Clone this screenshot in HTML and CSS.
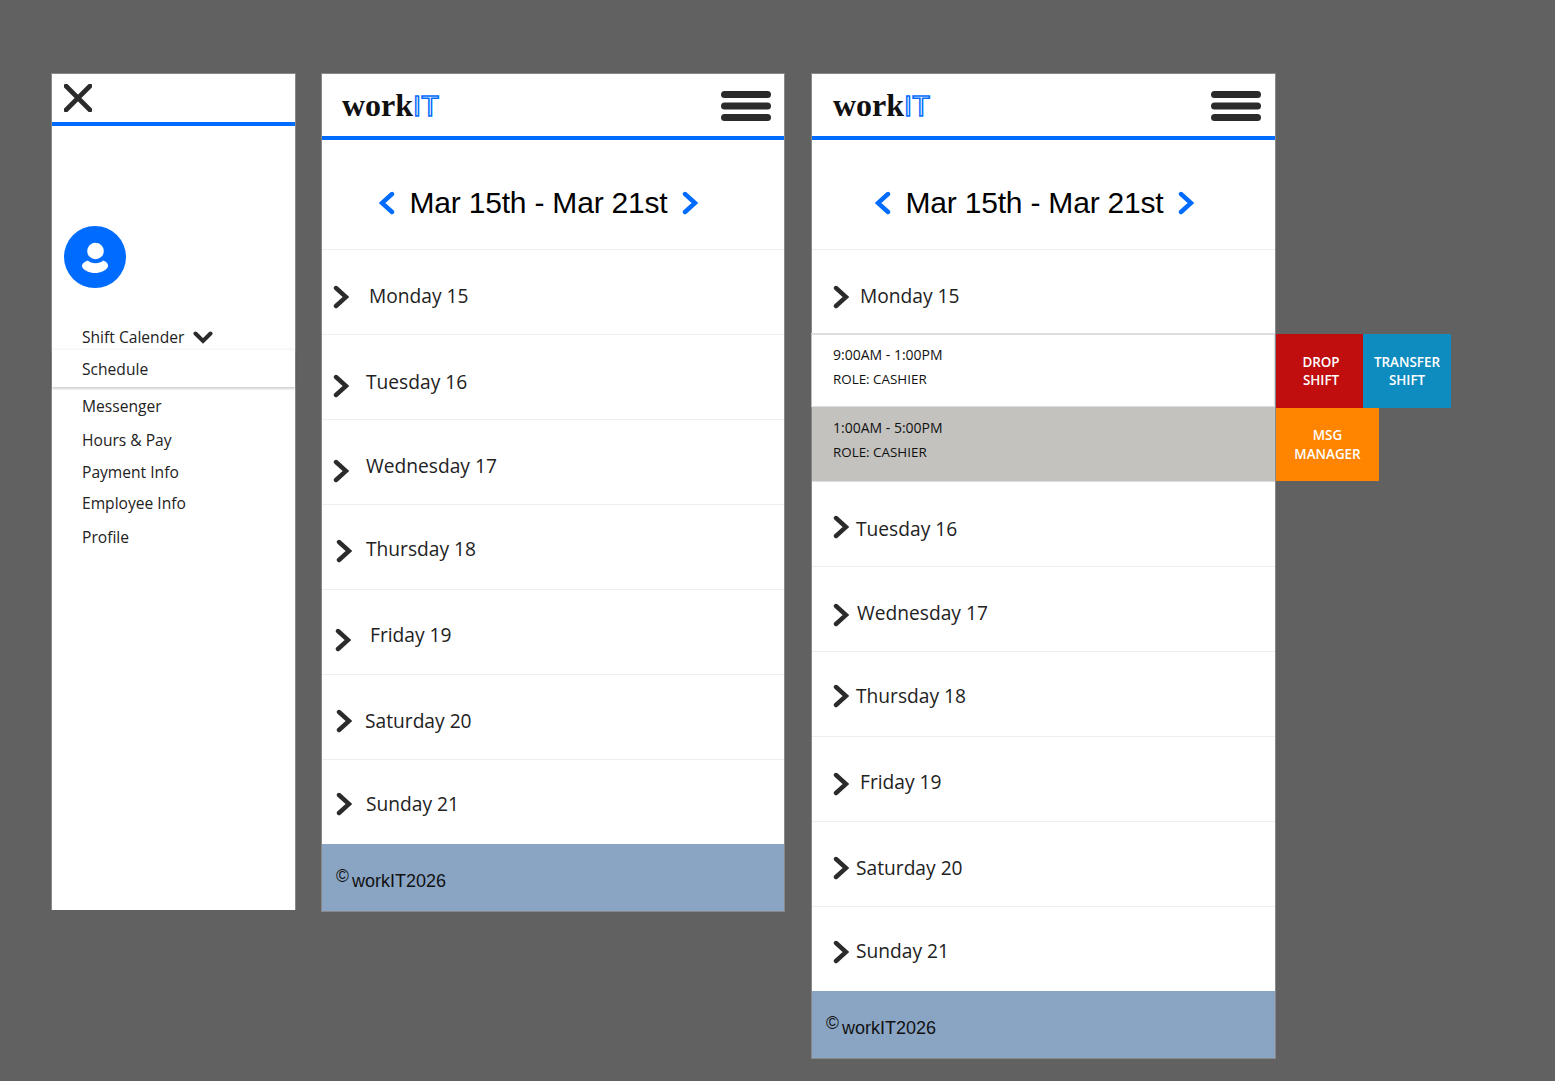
FILE: index.html
```html
<!DOCTYPE html>
<html>

<head>
  <title>workIT schedule</title>
  <link rel="stylesheet" href="styles.css">
</head>

<body>
  <svg class="defs" width="0" height="0">
    <symbol id="chev" viewBox="0 0 16 24">
      <path d="M3 3 L13 12 L3 21" fill="none" stroke="currentColor" stroke-width="4.4" stroke-linecap="round" stroke-linejoin="miter"/>
    </symbol>
    <symbol id="burger" viewBox="0 0 50 30">
      <rect x="0" y="0" width="50" height="7" rx="3.5"/>
      <rect x="0" y="11.5" width="50" height="7" rx="3.5"/>
      <rect x="0" y="23" width="50" height="7" rx="3.5"/>
    </symbol>
  </svg>

  <div class="canvas">
    <!-- side menu -->
    <div class="drawer">
      <div class="drawer-top">
        <svg class="close" viewBox="0 0 28 28"><path d="M2 2 L26 26 M26 2 L2 26" stroke="#2b2b2b" stroke-width="4.6" stroke-linecap="round"/></svg>
      </div>
      <div class="avatar">
        <svg viewBox="0 0 62 62">
          <circle cx="31" cy="31" r="31" fill="#006cff"/>
          <circle cx="31.500" cy="25" r="8.300" fill="#fff"/>
          <path d="M24 34.500 C27 38 36 38 39 34.500 C42.500 35.500 44.500 38 44 40.500 C42.500 44.500 36.500 47 31 47 C25.500 47 19.500 44.500 18 40.500 C17.500 38 20.500 35.500 24 34.500 Z" fill="#fff"/>
        </svg>
      </div>
      <div class="menu">
        <div class="menu-head">Shift Calender
          <svg class="menu-chev" viewBox="0 0 20 13"><path d="M2.500 2.500 L10 10 L17.500 2.500" fill="none" stroke="#2b2b2b" stroke-width="4" stroke-linecap="round"/></svg>
        </div>
        <div class="menu-sub">Schedule</div>
        <div class="menu-item m-msg">Messenger</div>
        <div class="menu-item m-hours">Hours &amp; Pay</div>
        <div class="menu-item m-pay">Payment Info</div>
        <div class="menu-item m-emp">Employee Info</div>
        <div class="menu-item m-prof">Profile</div>
      </div>
    </div>

    <!-- week collapsed -->
    <div class="phone">
      <div class="topbar">
        <div class="logo">work<span class="logo-it">IT</span></div>
        <svg class="burger"><use href="#burger"/></svg>
      </div>
      <div class="week">
        <svg class="week-chev flip"><use href="#chev"/></svg>
        <span class="week-label">Mar 15th - Mar 21st</span>
        <svg class="week-chev"><use href="#chev"/></svg>
      </div>
      <div class="day d-mon"><svg class="chev"><use href="#chev"/></svg><span>Monday 15</span></div>
      <div class="day d-tue"><svg class="chev"><use href="#chev"/></svg><span>Tuesday 16</span></div>
      <div class="day d-wed"><svg class="chev"><use href="#chev"/></svg><span>Wednesday 17</span></div>
      <div class="day d-thu"><svg class="chev"><use href="#chev"/></svg><span>Thursday 18</span></div>
      <div class="day d-fri"><svg class="chev"><use href="#chev"/></svg><span>Friday 19</span></div>
      <div class="day d-sat"><svg class="chev"><use href="#chev"/></svg><span>Saturday 20</span></div>
      <div class="day day-last d-sun"><svg class="chev"><use href="#chev"/></svg><span>Sunday 21</span></div>
      <div class="footer"><sup>©</sup>workIT2026</div>
    </div>

    <!-- week with monday open -->
    <div class="phone phone-open">
      <div class="topbar">
        <div class="logo">work<span class="logo-it">IT</span></div>
        <svg class="burger"><use href="#burger"/></svg>
      </div>
      <div class="week week-open">
        <svg class="week-chev flip"><use href="#chev"/></svg>
        <span class="week-label">Mar 15th - Mar 21st</span>
        <svg class="week-chev"><use href="#chev"/></svg>
      </div>
      <div class="day day-last o-mon"><svg class="chev"><use href="#chev"/></svg><span>Monday 15</span></div>
      <div class="shift shift-one">
        <div>9:00AM - 1:00PM</div>
        <div class="role">ROLE: CASHIER</div>
        <div class="actions">
          <div class="action drop">DROP<br>SHIFT</div>
          <div class="action transfer">TRANSFER<br>SHIFT</div>
        </div>
      </div>
      <div class="shift shift-two">
        <div>1:00AM - 5:00PM</div>
        <div class="role">ROLE: CASHIER</div>
        <div class="actions">
          <div class="action msg">MSG<br>MANAGER</div>
        </div>
      </div>
      <div class="day o-tue"><svg class="chev"><use href="#chev"/></svg><span>Tuesday 16</span></div>
      <div class="day o-wed"><svg class="chev"><use href="#chev"/></svg><span>Wednesday 17</span></div>
      <div class="day o-thu"><svg class="chev"><use href="#chev"/></svg><span>Thursday 18</span></div>
      <div class="day o-fri"><svg class="chev"><use href="#chev"/></svg><span>Friday 19</span></div>
      <div class="day o-sat"><svg class="chev"><use href="#chev"/></svg><span>Saturday 20</span></div>
      <div class="day day-last o-sun"><svg class="chev"><use href="#chev"/></svg><span>Sunday 21</span></div>
      <div class="footer"><sup>©</sup>workIT2026</div>
    </div>
  </div>
</body>

</html>
```

FILE: styles.css
```css
html, body {
  margin: 0;
  height: 100%;
}

body {
  background: #616161;
  font-family: "Open Sans", "Liberation Sans", sans-serif;
  color: #222;
  overflow: hidden;
}

.defs {
  display: block;
  height: 0;
}

.canvas {
  display: flex;
  align-items: flex-start;
  padding: 73px 0 0 51px;
}

/* side menu */
.drawer {
  width: 245px;
  height: 837px;
  box-sizing: border-box;
  background: #fff;
  border: 1px solid #888;
  border-bottom: 0;
  margin-right: 25px;
}

.drawer-top {
  height: 48px;
  border-bottom: 4px solid #006cff;
  box-sizing: content-box;
}

.close {
  display: block;
  width: 28px;
  height: 28px;
  padding: 10px 0 0 12px;
}

.avatar {
  width: 62px;
  height: 62px;
  margin: 100px 0 0 12px;
}

.avatar svg {
  display: block;
}

.menu {
  margin-top: 39px;
  font-size: 15.6px;
  line-height: 20px;
}

.menu-head {
  display: flex;
  align-items: center;
  height: 20px;
  padding-left: 30px;
}

.menu-chev {
  width: 20px;
  height: 13px;
  margin-left: 9px;
}

.menu-sub {
  height: 37px;
  line-height: 39px;
  margin-top: 3px;
  padding-left: 30px;
  box-shadow: 0 -1px 2px rgba(0,0,0,.06), 0 2px 2px rgba(0,0,0,.18);
}

.menu-item {
  padding-left: 30px;
}

.m-msg { margin-top: 9px; }
.m-hours { margin-top: 14px; }
.m-pay { margin-top: 12px; }
.m-emp { margin-top: 11px; }
.m-prof { margin-top: 14px; }

/* phone frames */
.phone {
  width: 464px;
  box-sizing: border-box;
  background: #fff;
  border: 1px solid #888;
  border-bottom: 0;
  margin-right: 26px;
}

.phone-open {
  width: 465px;
}

.topbar {
  height: 62px;
  border-bottom: 4px solid #006cff;
  display: flex;
  justify-content: space-between;
  align-items: center;
  padding: 0 13px 0 20px;
}

.phone-open .topbar {
  padding: 0 14px 0 21px;
}

.logo {
  font-family: "Liberation Serif", serif;
  font-weight: bold;
  font-size: 32px;
  color: #111;
}

.logo-it {
  font-family: "Liberation Sans", sans-serif;
  font-weight: normal;
  color: #fff;
  -webkit-text-stroke: 1.500px #006cff;
  font-size: 29px;
}

.burger {
  width: 50px;
  height: 30px;
  margin-top: 2px;
  fill: #2b2b2b;
}

.week {
  height: 110px;
  display: flex;
  justify-content: center;
  align-items: center;
  gap: 15px;
  padding: 16px 29px 0 0;
  border-bottom: 1px solid #eee;
  box-sizing: border-box;
  font-family: "Liberation Sans", sans-serif;
  font-size: 30px;
  letter-spacing: -0.2px;
  color: #000;
}

.week-open {
  padding-right: 18px;
}

.week-chev {
  width: 16px;
  height: 24px;
  color: #006cff;
}

.flip {
  transform: scaleX(-1);
}

.day {
  height: 85px;
  box-sizing: border-box;
  border-bottom: 1px solid #eee;
  display: flex;
  font-size: 19.2px;
  line-height: 28px;
}

.day-last {
  height: 84px;
  border-bottom: 0;
}

.chev {
  flex: none;
  width: 16px;
  height: 24px;
  color: #2b2b2b;
}

/* the mock is hand placed so every row sits a little differently */
.d-mon { padding: 32px 0 0 11px; gap: 20px; }
.d-tue { padding: 33px 0 0 11px; gap: 17px; }
.d-wed { padding: 32px 0 0 11px; gap: 17px; }
.d-thu { padding: 30px 0 0 14px; gap: 14px; }
.d-fri { padding: 31px 0 0 13px; gap: 19px; }
.d-sat { padding: 32px 0 0 14px; gap: 13px; }
.d-sun { padding: 30px 0 0 14px; gap: 14px; }

.d-mon .chev { margin-top: 3px; }
.d-tue .chev { margin-top: 6px; }
.d-wed .chev { margin-top: 7px; }
.d-thu .chev { margin-top: 4px; }
.d-fri .chev { margin-top: 7px; }
.d-sat .chev { margin-top: 2px; }
.d-sun .chev { margin-top: 2px; }

.o-mon { padding: 32px 0 0 21px; gap: 11px; }
.o-tue { padding: 33px 0 0 21px; gap: 7px; }
.o-wed { padding: 32px 0 0 21px; gap: 8px; }
.o-thu { padding: 30px 0 0 21px; gap: 7px; }
.o-fri { padding: 31px 0 0 21px; gap: 11px; }
.o-sat { padding: 32px 0 0 21px; gap: 7px; }
.o-sun { padding: 30px 0 0 21px; gap: 7px; }

.o-mon .chev { margin-top: 3px; }
.o-tue .chev { margin-top: 0; }
.o-wed .chev { margin-top: 4px; }
.o-thu .chev { margin-top: 2px; }
.o-fri .chev { margin-top: 4px; }
.o-sat .chev { margin-top: 2px; }
.o-sun .chev { margin-top: 3px; }

.footer {
  height: 67px;
  background: #8aa5c4;
  border-bottom: 1px solid #888;
  box-sizing: content-box;
  padding-left: 14px;
  font-family: "Liberation Sans", sans-serif;
  font-size: 18px;
  line-height: 74px;
  color: #111;
}

.footer sup {
  font-size: 17.5px;
  line-height: 0;
  vertical-align: 5px;
  margin-right: 3px;
}

/* open shifts */
.shift {
  position: relative;
  height: 75px;
  box-sizing: border-box;
  padding: 9px 0 0 21px;
  font-size: 14px;
  line-height: 24px;
  color: #111;
}

.role {
  font-size: 13.400px;
}

.shift-one {
  height: 74px;
  margin-top: -1px;
  padding-top: 8px;
  border: 1px solid #ddd;
  border-top-width: 2px;
  border-left-color: #bbb;
  margin-left: -1px;
}

.shift-two {
  background: #c3c2bf;
  border-bottom: 1px solid #ddd;
}

/* buttons hang off the right edge of the row */
.actions {
  position: absolute;
  top: 1px;
  left: calc(100% + 1px);
  display: flex;
}

.shift-one .actions {
  top: -1px;
  left: calc(100% + 2px);
}

.action {
  box-sizing: border-box;
  height: 74px;
  display: flex;
  align-items: center;
  justify-content: center;
  text-align: center;
  color: #fff;
  font-size: 13.4px;
  font-weight: 600;
  line-height: 18.500px;
}

.drop { width: 87px; padding-left: 3px; background: #c00d0d; }
.transfer { width: 88px; background: #0f8cbf; }
.msg { width: 103px; background: #ff8400; height: 73px; }
```
